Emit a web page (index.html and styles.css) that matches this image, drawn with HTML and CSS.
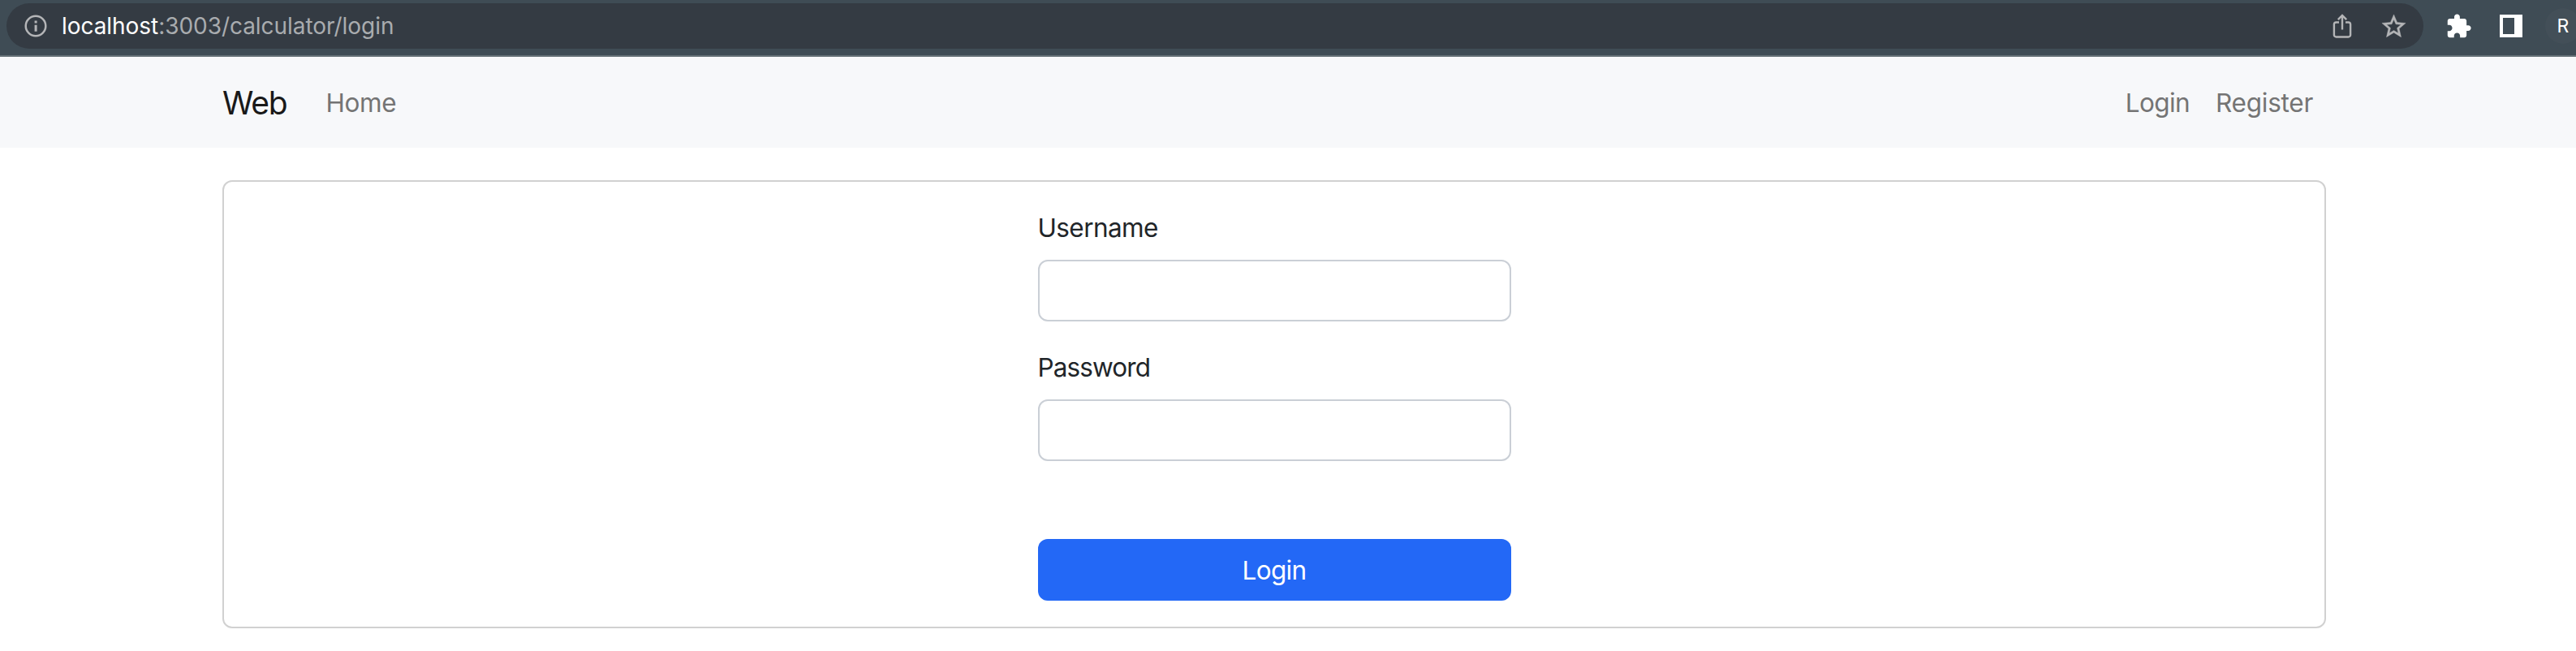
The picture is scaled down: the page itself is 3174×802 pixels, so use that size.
FILE: index.html
```html
<!DOCTYPE html>
<html lang="en">
<head>
<meta charset="utf-8">
<title>Login</title>
<link rel="stylesheet" href="styles.css">
</head>
<body>
<div class="toolbar">
  <div class="address">
    <svg class="info" width="28" height="28" viewBox="0 0 28 28"><circle cx="14" cy="14" r="12.3" fill="none" stroke="currentColor" stroke-width="2.5"/><path d="M12.6 7.5h3v3h-3zM12.6 12.7h3v8h-3z" fill="currentColor"/></svg>
    <span class="url"><span class="host">localhost</span>:3003/calculator/login</span>
    <svg class="share" width="24" height="32" viewBox="0 0 24 32"><path d="M8 11.5H4.5a2.6 2.6 0 0 0-2.6 2.6v12.8a2.6 2.6 0 0 0 2.6 2.6h15a2.6 2.6 0 0 0 2.6-2.6V14.1a2.6 2.6 0 0 0-2.6-2.6H16M12 20.5V3.5M6.8 8.2 12 3l5.2 5.2" fill="none" stroke="currentColor" stroke-width="2.4"/></svg>
    <svg class="star" width="35" height="35" viewBox="0 0 24 24"><path fill="currentColor" stroke="currentColor" stroke-width=".3" d="M22 9.24l-7.19-.62L12 2 9.19 8.63 2 9.24l5.46 4.73L5.82 21 12 17.27 18.18 21l-1.63-7.03L22 9.24zM12 15.4l-3.76 2.27 1-4.28-3.32-2.88 4.38-.38L12 6.1l1.71 4.04 4.38.38-3.32 2.88 1 4.28L12 15.4z"/></svg>
  </div>
  <svg class="puzzle" width="33" height="33" viewBox="0 0 24 24"><path fill="#fff" d="M20.5 11H19V7c0-1.1-.9-2-2-2h-4V3.5C13 2.12 11.88 1 10.5 1S8 2.12 8 3.5V5H4c-1.1 0-1.99.9-1.99 2v3.8H3.5c1.49 0 2.7 1.21 2.7 2.7s-1.21 2.7-2.7 2.7H2V20c0 1.1.9 2 2 2h3.8v-1.5c0-1.49 1.21-2.7 2.7-2.7 1.49 0 2.7 1.21 2.7 2.7V22H17c1.1 0 2-.9 2-2v-4h1.5c1.38 0 2.5-1.12 2.5-2.5S21.88 11 20.5 11z"/></svg>
  <svg class="panel" width="28" height="28" viewBox="0 0 28 28"><path fill="#fff" fill-rule="evenodd" d="M0 0h28v28H0zM4 4v20h14V4z"/></svg>
  <span class="profile">R</span>
</div>
<nav class="navbar">
  <a class="brand">Web</a>
  <a class="link home">Home</a>
  <a class="link login">Login</a>
  <a class="link register">Register</a>
</nav>
<main class="card">
  <form class="form">
    <label class="label username" for="username">Username</label>
    <input class="input" id="username" type="text">
    <label class="label password" for="password">Password</label>
    <input class="input" id="password" type="password">
    <button class="submit" type="button">Login</button>
  </form>
</main>
</body>
</html>
```
FILE: styles.css
```css
* { box-sizing: border-box; }
body { margin: 0; background: #fff; color: #212529; font: 31.5px/48px Inter, "Liberation Sans", sans-serif; overflow: hidden; }
svg { display: block; flex: none; }

.toolbar { height: 70px; padding: 4px 0 8px 8px; display: flex; align-items: flex-start; background: #3f4c55; border-bottom: 2px solid #657177; overflow: hidden; }
.address { flex: none; width: 2978px; height: 56px; padding: 0 19px 0 22px; border-radius: 28px; background: #343b43; color: #b4b5b7; display: flex; align-items: center; }
.url { margin-left: 18px; font-size: 28px; letter-spacing: -.05px; color: #a9acaf; white-space: nowrap; }
.host { color: #fff; }
.share { margin-left: auto; }
.star { margin-left: 34px; }
.puzzle { margin: 12px 0 0 27px; }
.panel { margin: 14px 0 0 34px; }
.profile { flex: none; width: 44px; height: 44px; margin: 6px 0 0 28px; border-radius: 50%; background: #434f58; color: #fff; font-size: 23px; line-height: 44px; text-align: center; }

.navbar { height: 112px; padding: 2px 324px 0 274px; display: flex; align-items: center; background: #f7f8fa; }
.brand { font-size: 39px; line-height: 60px; color: #191919; letter-spacing: -1.2px; }
.link { color: #747474; letter-spacing: -.4px; }
.home { margin-left: 48px; }
.login { margin-left: auto; letter-spacing: -.6px; }
.register { margin-left: 32px; letter-spacing: -.25px; }

.card { width: 2592px; height: 552px; margin: 40px 0 0 274px; padding: 32px 0; border: 2px solid #d1d1d1; border-radius: 12px; display: flex; justify-content: center; }
.form { width: 583px; display: flex; flex-direction: column; }
.label { padding-top: 1px; margin-bottom: 15px; letter-spacing: -.6px; }
.password { margin-top: 32px; letter-spacing: -.9px; }
.input { width: 100%; height: 76px; padding: 12px 24px; border: 2px solid #cacfd6; border-radius: 12px; background: #fff; font: inherit; outline: none; }
.submit { height: 76px; margin-top: 96px; padding: 1px 0 0; border: 0; border-radius: 12px; background: #2368f6; color: #fff; font: inherit; letter-spacing: -.7px; }
```
